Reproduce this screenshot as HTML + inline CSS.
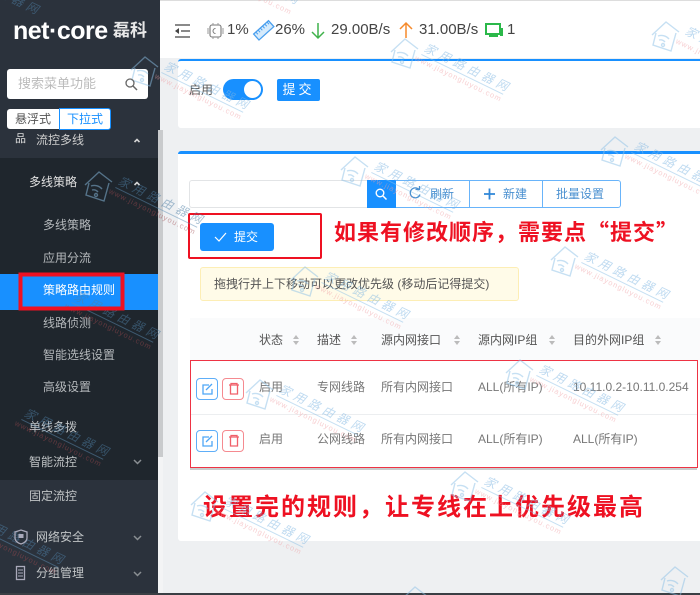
<!DOCTYPE html>
<html lang="zh-CN"><head><meta charset="utf-8"><title>策略路由规则</title>
<style>
html,body{margin:0;padding:0}
body{width:700px;height:595px;position:relative;overflow:hidden;background:#eef0f2;font-family:"Liberation Sans","Noto Sans CJK SC",sans-serif;color:#555;font-size:12px}
.a{position:absolute;white-space:nowrap}
.sub{color:#b4b8bb;font-size:12px;left:43px}
.th{color:#555;font-size:12px;top:332px;line-height:16px}
.td{color:#777;font-size:12px;line-height:16px}
.so{position:absolute;width:0;height:0;border-left:3.5px solid transparent;border-right:3.5px solid transparent}
.red{color:#ee1122;font-weight:bold;font-size:22px;line-height:26px}
.q{font-family:"Noto Sans CJK SC",sans-serif}
.s{color:#444;font-size:15px;line-height:18px;top:21px}
svg{position:absolute;left:0;top:0}
.w1{font-size:12px;font-style:italic;letter-spacing:4px;fill:#7fb6e2}
.w2{font-size:7.5px;letter-spacing:1px;fill:#f0a0a5}
.d .w1{fill:#4f7fa5}.d .w2{fill:#a04a50}
</style></head><body>
<div class="a" style="left:0;top:0;width:700px;height:1px;background:#ddd"></div>
<div class="a" style="left:160px;top:1px;width:540px;height:57px;background:#fff"></div>
<!-- sidebar -->
<div class="a" style="left:0;top:0;width:160px;height:595px;background:#2b323c"></div>
<div class="a" style="left:0;top:158px;width:158px;height:322px;background:#1f262d"></div>
<div class="a" style="left:0;top:274px;width:158px;height:36px;background:#1890ff"></div>
<div class="a" style="left:158px;top:130px;width:5px;height:327px;background:#c9cbcd"></div>
<div class="a" style="left:158px;top:457px;width:5px;height:136px;background:#f3f4f5"></div>
<div class="a" style="left:13px;top:17px;color:#fff;font-size:25px;font-weight:bold;line-height:28px;letter-spacing:-.5px">net·core</div>
<div class="a" style="left:113px;top:21px;color:#e8e8e8;font-size:17px;font-weight:bold;line-height:20px">磊科</div>
<div class="a" style="left:7px;top:69px;width:141px;height:30px;background:#fff;border-radius:3px"></div>
<div class="a" style="left:18px;top:76px;color:#bbb;font-size:13px;line-height:16px">搜索菜单功能</div>
<div class="a" style="left:7px;top:109px;width:52px;height:20px;background:#fff;border-radius:3px 0 0 3px;color:#555;font-size:12px;line-height:20px;text-align:center">悬浮式</div>
<div class="a" style="left:59px;top:108px;width:50px;height:20px;background:#fff;border:1px solid #1890ff;border-radius:0 3px 3px 0;color:#1890ff;font-size:12px;line-height:20px;text-align:center">下拉式</div>
<div class="a" style="left:15px;top:131px;color:#ddd;font-size:11px;line-height:16px">品</div>
<div class="a" style="left:36px;top:131px;color:#ccc;font-size:12px;line-height:18px">流控多线</div>
<div class="a" style="left:29px;top:174px;color:#e0e0e0;font-size:12px;line-height:16px">多线策略</div>
<div class="a sub" style="top:217px;line-height:16px">多线策略</div>
<div class="a sub" style="top:250px;line-height:16px">应用分流</div>
<div class="a" style="left:43px;top:282px;color:#fff;font-size:12px;line-height:16px">策略路由规则</div>
<div class="a sub" style="top:315px;line-height:16px">线路侦测</div>
<div class="a sub" style="top:347px;line-height:16px">智能选线设置</div>
<div class="a sub" style="top:379px;line-height:16px">高级设置</div>
<div class="a" style="left:29px;top:419px;color:#c0c4c6;font-size:12px;line-height:16px">单线多拨</div>
<div class="a" style="left:29px;top:454px;color:#c0c4c6;font-size:12px;line-height:16px">智能流控</div>
<div class="a" style="left:29px;top:488px;color:#c0c4c6;font-size:12px;line-height:16px">固定流控</div>
<div class="a" style="left:36px;top:529px;color:#c0c4c6;font-size:12px;line-height:16px">网络安全</div>
<div class="a" style="left:36px;top:565px;color:#c0c4c6;font-size:12px;line-height:16px">分组管理</div>
<!-- cards -->
<div class="a" style="left:178px;top:59px;width:522px;height:69px;background:#fff;box-sizing:border-box;border-top:2px solid #1890ff;border-radius:3px 0 0 3px"></div>
<div class="a" style="left:178px;top:151px;width:522px;height:390px;background:#fff;box-sizing:border-box;border-top:3px solid #1890ff;border-radius:3px 0 0 3px"></div>
<div class="a" style="left:189px;top:82px;color:#555;font-size:12px;line-height:16px">启用</div>
<div class="a" style="left:223px;top:79px;width:40px;height:21px;background:#1890ff;border-radius:11px"></div>
<div class="a" style="left:244px;top:81px;width:17px;height:17px;background:#fff;border-radius:50%"></div>
<div class="a" style="left:277px;top:79px;width:43px;height:22px;background:#1890ff;border-radius:2px;color:#fff;font-size:13px;line-height:22px;text-align:center;letter-spacing:3px">提交</div>
<!-- header stats -->
<div class="a s" style="left:227px">1%</div>
<div class="a s" style="left:275px">26%</div>
<div class="a s" style="left:331px">29.00B/s</div>
<div class="a s" style="left:419px">31.00B/s</div>
<div class="a s" style="left:507px">1</div>
<!-- toolbar -->
<div class="a" style="left:189px;top:180px;width:178px;height:28px;box-sizing:border-box;border:1px solid #e2e4e6;border-right:0;border-radius:3px 0 0 3px;background:#fff"></div>
<div class="a" style="left:367px;top:180px;width:29px;height:28px;background:#1890ff"></div>
<div class="a" style="left:396px;top:180px;width:225px;height:28px;box-sizing:border-box;border:1px solid #69b4fa;border-left:0;border-radius:0 3px 3px 0"></div>
<div class="a" style="left:469px;top:180px;width:1px;height:28px;background:#69b4fa"></div>
<div class="a" style="left:542px;top:180px;width:1px;height:28px;background:#69b4fa"></div>
<div class="a" style="left:430px;top:186px;color:#4a90d0;font-size:12px;line-height:16px">刷新</div>
<div class="a" style="left:503px;top:186px;color:#4a90d0;font-size:12px;line-height:16px">新建</div>
<div class="a" style="left:556px;top:186px;color:#4a90d0;font-size:12px;line-height:16px">批量设置</div>
<div class="a" style="left:188px;top:213px;width:134px;height:46px;box-sizing:border-box;border:2.5px solid #ee1122;border-radius:2px"></div>
<div class="a" style="left:200px;top:223px;width:74px;height:28px;background:#1890ff;border-radius:3px"></div>
<div class="a" style="left:234px;top:229px;color:#fff;font-size:12px;line-height:16px">提交</div>
<div class="a red" style="left:334px;top:218px;letter-spacing:1px">如果有修改顺序，需要点<span class="q">“</span>提交<span class="q">”</span></div>
<div class="a" style="left:200px;top:267px;width:319px;height:34px;box-sizing:border-box;background:#fffbe8;border:1px solid #fdeeb5;border-radius:3px"></div>
<div class="a" style="left:214px;top:276px;color:#555;font-size:12px;line-height:16px">拖拽行并上下移动可以更改优先级 (移动后记得提交)</div>
<!-- table -->
<div class="a" style="left:190px;top:318px;width:510px;height:42px;background:#fafbfc"></div>
<div class="a" style="left:190px;top:414px;width:507px;height:1px;background:#eceef0"></div>
<div class="a" style="left:190px;top:467px;width:507px;height:3px;background:#c9cccc"></div>
<div class="a th" style="left:259px">状态</div>
<div class="a th" style="left:317px">描述</div>
<div class="a th" style="left:381px">源内网接口</div>
<div class="a th" style="left:478px">源内网IP组</div>
<div class="a th" style="left:573px">目的外网IP组</div>
<i class="so" style="left:293px;top:335px;border-bottom:4px solid #bbb"></i><i class="so" style="left:293px;top:341px;border-top:4px solid #bbb"></i>
<i class="so" style="left:351px;top:335px;border-bottom:4px solid #bbb"></i><i class="so" style="left:351px;top:341px;border-top:4px solid #bbb"></i>
<i class="so" style="left:454px;top:335px;border-bottom:4px solid #bbb"></i><i class="so" style="left:454px;top:341px;border-top:4px solid #bbb"></i>
<i class="so" style="left:549px;top:335px;border-bottom:4px solid #bbb"></i><i class="so" style="left:549px;top:341px;border-top:4px solid #bbb"></i>
<i class="so" style="left:655px;top:335px;border-bottom:4px solid #bbb"></i><i class="so" style="left:655px;top:341px;border-top:4px solid #bbb"></i>
<div class="a td" style="left:259px;top:379px">启用</div>
<div class="a td" style="left:317px;top:379px">专网线路</div>
<div class="a td" style="left:381px;top:379px">所有内网接口</div>
<div class="a td" style="left:478px;top:379px">ALL(所有IP)</div>
<div class="a td" style="left:573px;top:379px">10.11.0.2-10.11.0.254</div>
<div class="a td" style="left:259px;top:431px">启用</div>
<div class="a td" style="left:317px;top:431px">公网线路</div>
<div class="a td" style="left:381px;top:431px">所有内网接口</div>
<div class="a td" style="left:478px;top:431px">ALL(所有IP)</div>
<div class="a td" style="left:573px;top:431px">ALL(所有IP)</div>
<div class="a" style="left:196px;top:378px;width:22px;height:22px;box-sizing:border-box;border:1px solid #5eaef8;border-radius:4px"></div>
<div class="a" style="left:222px;top:378px;width:22px;height:22px;box-sizing:border-box;border:1px solid #f58a90;border-radius:4px"></div>
<div class="a" style="left:196px;top:430px;width:22px;height:22px;box-sizing:border-box;border:1px solid #5eaef8;border-radius:4px"></div>
<div class="a" style="left:222px;top:430px;width:22px;height:22px;box-sizing:border-box;border:1px solid #f58a90;border-radius:4px"></div>
<div class="a" style="left:190px;top:360px;width:508px;height:108px;box-sizing:border-box;border:1px solid #ee3344"></div>
<div class="a red" style="left:203px;top:494px;font-size:24px;letter-spacing:2px;line-height:28px">设置完的规则，让专线在上优先级最高</div>
<div class="a" style="left:0;top:593px;width:700px;height:2px;background:#3a3f44"></div>
<!-- icons + watermark -->
<svg width="700" height="595" viewBox="0 0 700 595" fill="none">
<defs><g id="h" stroke="#8cc0e6" stroke-width="1.4" fill="none"><path d="M1 15 L15 2 L28 12 M5 13 L2 25 L20 31 L25 13"/><path d="M7 16 a10 10 0 0 1 11 3 M8 20 a6 6 0 0 1 6 2"/><circle cx="12" cy="25" r="1.5"/></g></defs>
<g font-family="Liberation Sans,Noto Sans CJK SC,sans-serif" opacity=".5">
<g transform="translate(130 55)"><use href="#h"/><g transform="rotate(26 34 12)"><text x="34" y="14" class="w1">家用路由器网</text><path d="M34 18H125" stroke="#8cc0e6"/><text x="30" y="26" class="w2">www.jiayongluyou.com</text></g></g>
<g transform="translate(390 37)"><use href="#h"/><g transform="rotate(26 34 12)"><text x="34" y="14" class="w1">家用路由器网</text><path d="M34 18H125" stroke="#8cc0e6"/><text x="30" y="26" class="w2">www.jiayongluyou.com</text></g></g>
<g transform="translate(651 20)"><use href="#h"/><g transform="rotate(26 34 12)"><text x="34" y="14" class="w1">家用路由器网</text><text x="30" y="26" class="w2">www.jiayongluyou.com</text></g></g>
<g class="d" transform="translate(84 170)"><use href="#h"/><g transform="rotate(26 34 12)"><text x="34" y="14" class="w1">家用路由器网</text><path d="M34 18H125" stroke="#5f8fb5"/><text x="30" y="26" class="w2">www.jiayongluyou.com</text></g></g>
<g transform="translate(340 155)"><use href="#h"/><g transform="rotate(26 34 12)"><text x="34" y="14" class="w1">家用路由器网</text><path d="M34 18H125" stroke="#8cc0e6"/><text x="30" y="26" class="w2">www.jiayongluyou.com</text></g></g>
<g transform="translate(600 135)"><use href="#h"/><g transform="rotate(26 34 12)"><text x="34" y="14" class="w1">家用路由器网</text><path d="M34 18H125" stroke="#8cc0e6"/><text x="30" y="26" class="w2">www.jiayongluyou.com</text></g></g>
<g class="d" transform="translate(40 285)"><g transform="rotate(26 34 12)"><text x="34" y="14" class="w1">家用路由器网</text><path d="M34 18H125" stroke="#5f8fb5"/><text x="30" y="26" class="w2">www.jiayongluyou.com</text></g></g>
<g transform="translate(290 265)"><use href="#h"/><g transform="rotate(26 34 12)"><text x="34" y="14" class="w1">家用路由器网</text><path d="M34 18H125" stroke="#8cc0e6"/><text x="30" y="26" class="w2">www.jiayongluyou.com</text></g></g>
<g transform="translate(550 245)"><use href="#h"/><g transform="rotate(26 34 12)"><text x="34" y="14" class="w1">家用路由器网</text><path d="M34 18H125" stroke="#8cc0e6"/><text x="30" y="26" class="w2">www.jiayongluyou.com</text></g></g>
<g class="d" transform="translate(-10 402)"><g transform="rotate(26 34 12)"><text x="34" y="14" class="w1">家用路由器网</text><path d="M34 18H125" stroke="#5f8fb5"/><text x="30" y="26" class="w2">www.jiayongluyou.com</text></g></g>
<g transform="translate(245 378)"><use href="#h"/><g transform="rotate(26 34 12)"><text x="34" y="14" class="w1">家用路由器网</text><path d="M34 18H125" stroke="#8cc0e6"/><text x="30" y="26" class="w2">www.jiayongluyou.com</text></g></g>
<g transform="translate(505 358)"><use href="#h"/><g transform="rotate(26 34 12)"><text x="34" y="14" class="w1">家用路由器网</text><path d="M34 18H125" stroke="#8cc0e6"/><text x="30" y="26" class="w2">www.jiayongluyou.com</text></g></g>
<g class="d" transform="translate(-55 510)"><g transform="rotate(26 34 12)"><text x="34" y="14" class="w1">家用路由器网</text><path d="M34 18H125" stroke="#5f8fb5"/><text x="30" y="26" class="w2">www.jiayongluyou.com</text></g></g>
<g transform="translate(190 490)"><use href="#h"/><g transform="rotate(26 34 12)"><text x="34" y="14" class="w1">家用路由器网</text><path d="M34 18H125" stroke="#8cc0e6"/><text x="30" y="26" class="w2">www.jiayongluyou.com</text></g></g>
<g transform="translate(450 470)"><use href="#h"/><g transform="rotate(26 34 12)"><text x="34" y="14" class="w1">家用路由器网</text><path d="M34 18H125" stroke="#8cc0e6"/><text x="30" y="26" class="w2">www.jiayongluyou.com</text></g></g>
<g transform="translate(400 585)"><use href="#h"/></g>
<g transform="translate(660 565)"><use href="#h"/></g>
<g class="d" transform="translate(-80 -40)"><g transform="rotate(26 34 12)"><text x="34" y="14" class="w1">家用路由器网</text></g></g>
<g transform="translate(180 -50)"><g transform="rotate(26 34 12)"><text x="34" y="14" class="w1">家用路由器网</text><text x="30" y="26" class="w2">www.jiayongluyou.com</text></g></g>
</g>
<!-- sidebar search icon -->
<circle cx="130" cy="83" r="4" stroke="#666" stroke-width="1.3"/><path d="M133 86l4 4" stroke="#666" stroke-width="1.5"/>
<!-- chevrons -->
<g stroke="#d5d5d5" stroke-width="1.6"><path d="M134.500 142l2.500-2.500 2.500 2.500M134.500 185l2.500-2.500 2.500 2.500"/></g>
<g stroke="#8a8f93" stroke-width="1.5"><path d="M134 460l3.500 3.500 3.500-3.500M134 536l3.500 3.500 3.500-3.500M134 572l3.500 3.500 3.500-3.500"/></g>
<!-- side icons -->
<path d="M15 532l6-2 6 2v6c0 3-3 5-6 6c-3-1-6-3-6-6z" stroke="#aab" stroke-width="1.300"/><rect x="18.500" y="534" width="5" height="4" fill="#aab"/>
<rect x="16.500" y="566.500" width="8" height="13" stroke="#aab" stroke-width="1.300"/><path d="M18 570h5M18 573h5M18 576h5" stroke="#aab"/>
<!-- header icons -->
<g stroke="#444" stroke-width="1.300"><path d="M175 25h15M175 37h15M181 31h9"/></g><path d="M179 28l-4 3 4 3z" fill="#444"/>
<rect x="210" y="25" width="11" height="12" rx="2" stroke="#777" stroke-width="1.100"/><path d="M218 28.500a2.500 2.500 0 1 0 0 5" stroke="#777" transform="translate(-2.500 0)"/>
<path d="M208 28v6M223 28v6M213 23v2M218 23v2M213 37v2M218 37v2" stroke="#999"/>
<g transform="rotate(-42 263 31)"><rect x="254" y="27" width="20" height="8" stroke="#4a9fee" stroke-width="1.300" fill="#d6ebfc"/><path d="M257 27v3M260 27v3M263 27v3M266 27v3M269 27v3M272 27v3" stroke="#4a9fee"/></g>
<path d="M318 23v15M312 32l6 6 6-6" stroke="#3fb24b" stroke-width="1.500"/>
<path d="M406 38v-15M400 29l6-6 6 6" stroke="#f58a2c" stroke-width="1.500"/>
<rect x="486" y="24" width="14" height="10" stroke="#2bb84a" stroke-width="2"/><path d="M489 36h9" stroke="#2bb84a" stroke-width="2"/><rect x="500" y="28" width="3" height="8" fill="#2bb84a"/>
<!-- toolbar icons -->
<circle cx="380" cy="193" r="3.800" stroke="#fff" stroke-width="1.400"/><path d="M383 196l3.500 3.500" stroke="#fff" stroke-width="1.500"/>
<path d="M421 190a5 5 0 1 0 1 5M417.500 190h4v-3.500" stroke="#4a90d0" stroke-width="1.300" transform="translate(-2 -.5)"/>
<path d="M484 194h11M489.500 188.500v11" stroke="#2f86d8" stroke-width="1.800"/>
<path d="M215 237l4 4 7-8" stroke="#fff" stroke-width="1.200"/>
<!-- row icons -->
<g stroke="#4ea6f6" stroke-width="1.300"><path d="M209 385h-6v9h9v-5M206 390l6-6"/><path transform="translate(0 52)" d="M209 385h-6v9h9v-5M206 390l6-6"/></g>
<g stroke="#f0606a" stroke-width="1.300"><path d="M229 385h10M231 385v-1.500h6v1.500M230.500 385.500v8.500h7v-8.500"/><path transform="translate(0 52)" d="M229 385h10M231 385v-1.500h6v1.500M230.500 385.500v8.500h7v-8.500"/></g>
<!-- annotation box -->
<rect x="20.500" y="274.500" width="102" height="34" stroke="#ee1122" stroke-width="4"/>
</svg>
</body></html>
